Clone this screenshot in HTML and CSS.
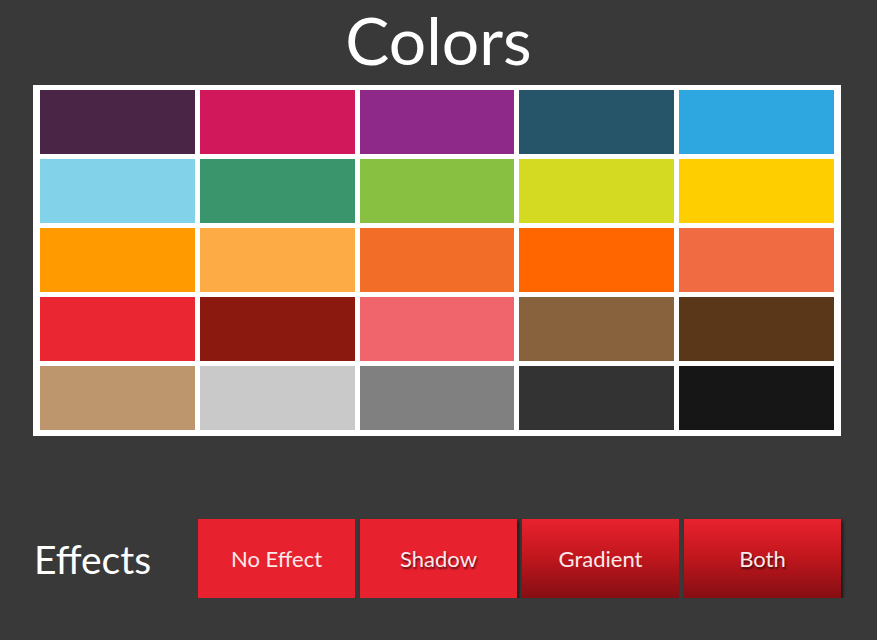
FILE: index.html
```html
<!DOCTYPE html>
<html lang="en">
<head>
  <meta charset="UTF-8">
  <title>Colors</title>
  <link rel="stylesheet" href="styles.css">
</head>
<body>
  <h1 class="title">Colors</h1>

  <div class="palette">
    <div class="swatch" style="background:#4a2545"></div>
    <div class="swatch" style="background:#d1185a"></div>
    <div class="swatch" style="background:#8e2889"></div>
    <div class="swatch" style="background:#265468"></div>
    <div class="swatch" style="background:#2ea6df"></div>

    <div class="swatch" style="background:#82d3ea"></div>
    <div class="swatch" style="background:#3a956d"></div>
    <div class="swatch" style="background:#88c142"></div>
    <div class="swatch" style="background:#d4da22"></div>
    <div class="swatch" style="background:#fece00"></div>

    <div class="swatch" style="background:#ff9a00"></div>
    <div class="swatch" style="background:#fdab44"></div>
    <div class="swatch" style="background:#f26e28"></div>
    <div class="swatch" style="background:#ff6600"></div>
    <div class="swatch" style="background:#f06b41"></div>

    <div class="swatch" style="background:#ea2633"></div>
    <div class="swatch" style="background:#8b1910"></div>
    <div class="swatch" style="background:#f0646c"></div>
    <div class="swatch" style="background:#88623d"></div>
    <div class="swatch" style="background:#5a3718"></div>

    <div class="swatch" style="background:#be966e"></div>
    <div class="swatch" style="background:#c9c9c9"></div>
    <div class="swatch" style="background:#808080"></div>
    <div class="swatch" style="background:#333333"></div>
    <div class="swatch" style="background:#161616"></div>
  </div>

  <div class="effects">
    <div class="effects-label">Effects</div>
    <div class="buttons">
      <button class="btn">No Effect</button>
      <button class="btn shadow">Shadow</button>
      <button class="btn gradient">Gradient</button>
      <button class="btn gradient shadow">Both</button>
    </div>
  </div>
</body>
</html>
```
FILE: styles.css
```css
body {
  margin: 0;
  background-color: #393939;
  font-family: Lato, "Open Sans", sans-serif;
  color: #fff;
}

.title {
  margin: 0;
  height: 85px;
  font-size: 66px;
  font-weight: normal;
  line-height: 80px;
  text-align: center;
}

.palette {
  display: grid;
  grid-template-columns: repeat(5, 1fr);
  grid-auto-rows: 64px;
  gap: 5px;
  width: 794px;
  margin-left: 33px;
  padding: 5px 7px 6px 7px;
  background-color: #fff;
}

.effects {
  display: flex;
  align-items: center;
  margin-top: 83px;
  padding-left: 34px;
}

.effects-label {
  width: 164px;
  font-size: 39px;
}

.buttons {
  display: flex;
  gap: 5px;
}

.btn {
  width: 157px;
  height: 79px;
  border: none;
  background-color: #e8212f;
  color: #fbeaea;
  font-family: Lato, "Open Sans", sans-serif;
  font-size: 22px;
  padding: 0;
}

.shadow {
  box-shadow: 2px 2px 3px rgba(0, 0, 0, 0.6);
  text-shadow: 1px 2px 2px rgba(0, 0, 0, 0.6);
}

.gradient {
  background: linear-gradient(to bottom, #e8222f 0%, #c4171e 45%, #850e13 100%);
}
```
